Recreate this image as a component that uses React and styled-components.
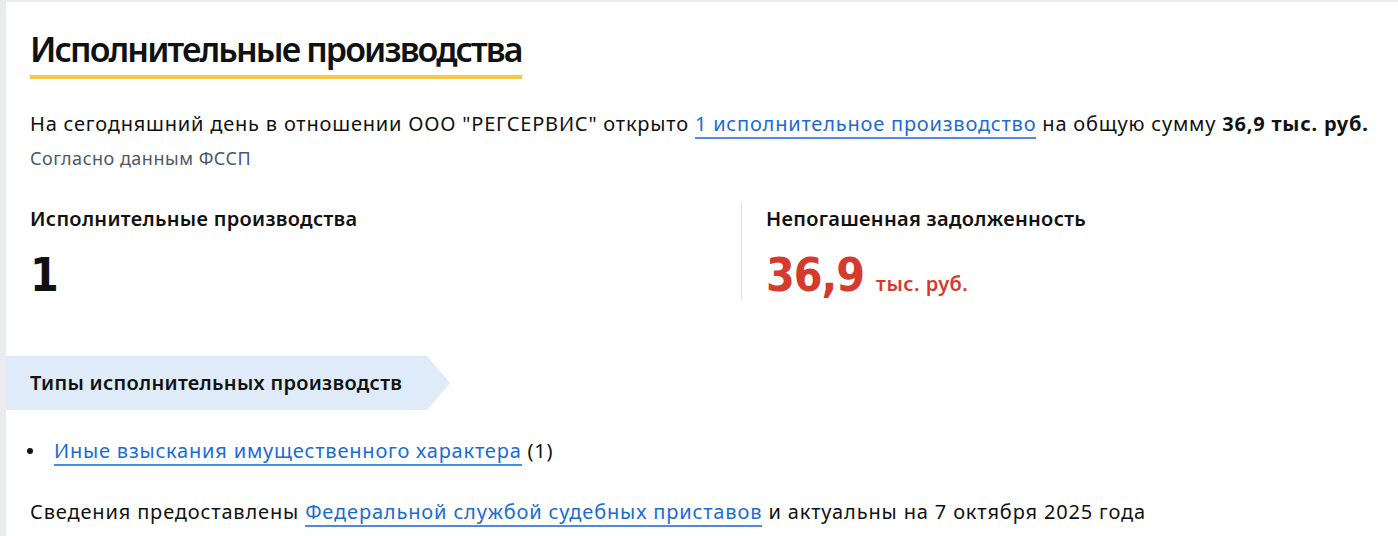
import React from 'react';
import styled, {createGlobalStyle} from 'styled-components';

const GlobalStyle = createGlobalStyle`
  html, body {
    margin: 0;
    padding: 0;
    background: #eaebef;
  }
  body {
    font-family: "Noto Sans", "Open Sans", sans-serif;
    color: #111;
  }
`;

const Card = styled.section`
  margin: 2px 0 0 6px;
  background: #fff;
  min-height: 534px;
  padding-top: 27px;
  box-sizing: border-box;
`;

const Inner = styled.div`
  padding: 0 24px;
`;

const Title = styled.h2`
  display: inline-block;
  margin: 0;
  font-size: 34px;
  font-weight: 600;
  line-height: 40px;
  letter-spacing: -1.9px;
  padding-bottom: 6px;
  border-bottom: 4px solid #fcc842;
`;

const Lead = styled.p`
  margin: 30px 0 0;
  font-size: 20px;
  line-height: 30px;
  letter-spacing: 0.8px;
`;

const Link = styled.a`
  color: #1c6bd0;
  text-decoration: none;
  border-bottom: 2px solid #4d8be2;
`;

const Note = styled.div`
  margin-top: 7px;
  font-size: 18px;
  line-height: 24px;
  letter-spacing: 0.5px;
  color: #4c5866;
`;

const Stats = styled.div`
  display: grid;
  grid-template-columns: 711px 1fr;
  margin-top: 32px;
`;

const Stat = styled.div`
  padding: 4px 0 0 ${p => (p.$divided ? '24px' : '0')};
  border-left: ${p => (p.$divided ? '1px solid #e2e3e8' : 'none')};
`;

const StatLabel = styled.div`
  font-size: 20px;
  font-weight: 600;
  line-height: 26px;
  letter-spacing: 0.3px;
`;

const StatValue = styled.div`
  margin-top: 18px;
  font-family: "DejaVu Sans Condensed", "DejaVu Sans", sans-serif;
  font-stretch: condensed;
  font-weight: 700;
  font-size: 46px;
  line-height: 50px;
  letter-spacing: -1px;
  color: ${p => p.$color || '#111'};
`;

const Unit = styled.span`
  font-family: "Noto Sans", sans-serif;
  font-stretch: normal;
  font-size: 20px;
  line-height: 1;
  font-weight: 600;
  letter-spacing: 0.5px;
  margin-left: 12px;
`;

const Banner = styled.div`
  margin-top: 56px;
  display: flex;
  align-items: center;
  width: 444px;
  height: 54px;
  padding-left: 24px;
  box-sizing: border-box;
  background: #dfebf8;
  clip-path: polygon(0 0, 421px 0, 444px 50%, 421px 100%, 0 100%);
  font-size: 20px;
  line-height: 26px;
  font-weight: 600;
  letter-spacing: 0.3px;
`;

const List = styled.ul`
  list-style: none;
  margin: 26px 0 0;
  padding: 0;
  font-size: 20px;
  line-height: 30px;
  letter-spacing: 0.8px;
`;

const Item = styled.li`
  &::before {
    content: '';
    display: inline-block;
    width: 6px;
    height: 6px;
    border-radius: 50%;
    background: #111;
    margin: 0 21px 0 -3px;
    vertical-align: 4px;
  }
`;

const Footer = styled.p`
  margin: 31px 0 0;
  font-size: 20px;
  line-height: 30px;
  letter-spacing: 0.85px;
`;

export default function App() {
    return (
        <>
            <GlobalStyle/>
            <Card>
                <Inner>
                    <Title>Исполнительные производства</Title>
                    <Lead>
                        На сегодняшний день в отношении ООО "РЕГСЕРВИС" открыто{' '}
                        <Link href="#">1 исполнительное производство</Link> на общую сумму <b>36,9 тыс. руб.</b>
                    </Lead>
                    <Note>Согласно данным ФССП</Note>
                    <Stats>
                        <Stat>
                            <StatLabel>Исполнительные производства</StatLabel>
                            <StatValue>1</StatValue>
                        </Stat>
                        <Stat $divided>
                            <StatLabel>Непогашенная задолженность</StatLabel>
                            <StatValue $color="#d63a2c">36,9<Unit>тыс. руб.</Unit></StatValue>
                        </Stat>
                    </Stats>
                </Inner>
                <Banner>Типы исполнительных производств</Banner>
                <Inner>
                    <List>
                        <Item><Link href="#">Иные взыскания имущественного характера</Link> (1)</Item>
                    </List>
                    <Footer>
                        Сведения предоставлены <Link href="#">Федеральной службой судебных приставов</Link> и актуальны на 7 октября 2025 года
                    </Footer>
                </Inner>
            </Card>
        </>
    );
}
